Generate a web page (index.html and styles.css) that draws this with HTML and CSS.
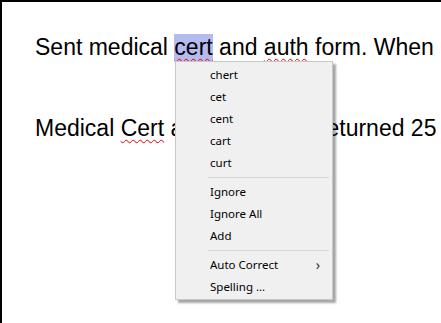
FILE: index.html
```html
<!DOCTYPE html>
<html lang="en">
<head>
  <meta charset="UTF-8" />
  <title>Spell check menu</title>
  <link rel="stylesheet" href="styles.css">
</head>
<body>
  <div class="page">
    <p class="line">Sent medical <span class="sel"><span class="miss">cert</span></span> and <span class="miss">auth</span> form. When</p>
    <p class="line">Medical <span class="miss">Cert</span> and auth form returned 25</p>

    <div class="menu">
      <div class="item">chert</div>
      <div class="item">cet</div>
      <div class="item">cent</div>
      <div class="item">cart</div>
      <div class="item">curt</div>
      <div class="sep"></div>
      <div class="item">Ignore</div>
      <div class="item">Ignore All</div>
      <div class="item">Add</div>
      <div class="sep"></div>
      <div class="item sub">Auto Correct <span class="arrow">&rsaquo;</span></div>
      <div class="item">Spelling ...</div>
    </div>
  </div>
</body>
</html>
```

FILE: styles.css
```css
body {
  margin: 0;
  background: #fff;
}
.page {
  position: relative;
  height: 321px;
  border-top: 2px solid #000;
  border-left: 2px solid #000;
  overflow: hidden;
  font-family: "Liberation Sans", Arial, sans-serif;
  font-size: 23px;
  color: #000;
}
.line {
  margin: 0;
  padding: 32px 0 0 33px;
  height: 49px;
  line-height: 27px;
  white-space: nowrap;
}
.sel {
  background: #b5bbee;
  display: inline-block;
}
.miss {
  text-decoration: underline wavy #e00000;
  text-decoration-thickness: 1px;
  text-underline-offset: 3px;
}
.menu {
  position: absolute;
  left: 173px;
  top: 59px;
  width: 156px;
  padding: 2px 0 1px;
  background: #f0f0f0;
  border: 1px solid #c8c8c8;
  box-shadow: 3px 3px 2px rgba(0, 0, 0, 0.35);
  font-family: "Noto Sans", "Open Sans", sans-serif;
  font-size: 11.5px;
}
.item {
  height: 22px;
  line-height: 22px;
  padding-left: 34px;
  position: relative;
}
.sep {
  height: 1px;
  margin: 3px 3px 3px 32px;
  background: #d7d7d7;
}
.arrow {
  position: absolute;
  right: 12px;
  top: 0;
  font-size: 14px;
  color: #333;
}
```
